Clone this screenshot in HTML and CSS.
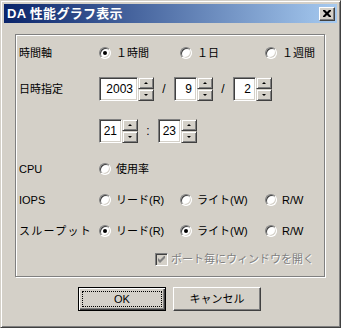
FILE: index.html
```html
<!DOCTYPE html>
<html lang="ja">
<head>
    <meta charset="UTF-8" />
    <title>DA 性能グラフ表示</title>
    <link rel="stylesheet" href="styles.css">
</head>
<body>

    <div class="window">
        <div class="titlebar">
            <span class="title">DA 性能グラフ表示</span>
            <button class="close">
                <svg width="8" height="7" viewBox="0 0 8 7">
                    <path d="M0 0h2l2 2 2-2h2v1L5.5 3.5 8 6v1H6L4 5 2 7H0V6l2.5-2.5L0 1z" fill="#000"/>
                </svg>
            </button>
        </div>

        <div class="client">
            <div class="group">
                <div class="row axis">
                    <span class="label">時間軸</span>
                    <span class="opt col1"><span class="radio on"></span>１時間</span>
                    <span class="opt col2"><span class="radio"></span>１日</span>
                    <span class="opt"><span class="radio"></span>１週間</span>
                </div>

                <div class="row date">
                    <span class="label">日時指定</span>
                    <span class="spin">
                        <span class="field wide">2003</span>
                        <span class="arrows"><span class="up"></span><span class="down"></span></span>
                    </span>
                    <span class="sep">/</span>
                    <span class="spin">
                        <span class="field">9</span>
                        <span class="arrows"><span class="up"></span><span class="down"></span></span>
                    </span>
                    <span class="sep">/</span>
                    <span class="spin">
                        <span class="field">2</span>
                        <span class="arrows"><span class="up"></span><span class="down"></span></span>
                    </span>
                </div>

                <div class="row time">
                    <span class="label"></span>
                    <span class="spin">
                        <span class="field">21</span>
                        <span class="arrows"><span class="up"></span><span class="down"></span></span>
                    </span>
                    <span class="sep">:</span>
                    <span class="spin">
                        <span class="field">23</span>
                        <span class="arrows"><span class="up"></span><span class="down"></span></span>
                    </span>
                </div>

                <div class="row cpu">
                    <span class="label">CPU</span>
                    <span class="opt col1"><span class="radio"></span>使用率</span>
                </div>

                <div class="row iops">
                    <span class="label">IOPS</span>
                    <span class="opt col1"><span class="radio"></span>リード(R)</span>
                    <span class="opt col2"><span class="radio"></span>ライト(W)</span>
                    <span class="opt"><span class="radio"></span>R/W</span>
                </div>

                <div class="row thru">
                    <span class="label wide-kana">スループット</span>
                    <span class="opt col1"><span class="radio on"></span>リード(R)</span>
                    <span class="opt col2"><span class="radio on"></span>ライト(W)</span>
                    <span class="opt"><span class="radio"></span>R/W</span>
                </div>

                <div class="row port">
                    <span class="check">
                        <svg width="7" height="7" viewBox="0 0 7 7">
                            <path d="M0 2v3l2 2 5-5V-1L2 4z" fill="#808080"/>
                        </svg>
                    </span>
                    <span class="disabled">ポート毎にウィンドウを開く</span>
                </div>
            </div>

            <div class="buttons">
                <button class="btn default"><span class="focus">OK</span></button>
                <button class="btn">キャンセル</button>
            </div>
        </div>
    </div>

</body>
</html>
```

FILE: styles.css
```css
* {
    box-sizing: border-box;
    margin: 0;
    padding: 0;
}

body {
    background: #fff;
    font-family: 'Liberation Sans', 'Noto Sans CJK JP', sans-serif;
    font-size: 11px;
    line-height: 13px;
    color: #000;
}

.window {
    width: 341px;
    height: 328px;
    background: #d4d0c8;
    border: 1px solid;
    border-color: #d4d0c8 #404040 #404040 #d4d0c8;
    box-shadow: inset 1px 1px #fff, inset -1px -1px #808080;
    padding: 3px;
}

.titlebar {
    height: 19px;
    display: flex;
    align-items: center;
    justify-content: space-between;
    padding: 0 2px 0 3px;
    background: linear-gradient(to right, #0a246a, #a6caf0);
}

.title {
    color: #fff;
    font-weight: bold;
    font-size: 13px;
    letter-spacing: 0.3px;
}

.close {
    width: 16px;
    height: 14px;
    display: flex;
    align-items: center;
    justify-content: center;
    background: #d4d0c8;
    border: 1px solid;
    border-color: #fff #404040 #404040 #fff;
    box-shadow: inset -1px -1px #808080;
}

.client {
    padding-top: 11px;
}

/* group box */
.group {
    width: 310px;
    margin-left: 11px;
    border: 1px solid #808080;
    box-shadow: 1px 1px #fff, inset 1px 1px #fff;
    padding: 6px 0 5px 3px;
}

.row {
    display: flex;
    align-items: center;
    height: 24px;
}

.date { margin-top: 12px; }
.time { margin-top: 18px; }
.cpu { margin-top: 14px; }
.iops { margin-top: 7px; }
.thru { margin-top: 7px; }
.port { margin-top: 4px; padding-left: 136px; }

.label {
    width: 80px;
    flex-shrink: 0;
}

.wide-kana {
    letter-spacing: 1.3px;
}

.opt {
    display: flex;
    align-items: center;
    gap: 5px;
}

.col1 { width: 81px; }
.col2 { width: 85px; }

.radio {
    position: relative;
    width: 12px;
    height: 12px;
    border-radius: 50%;
    border: 1px solid;
    border-color: #808080 #fff #fff #808080;
    box-shadow: inset 1px 1px #404040, inset -1px -1px #d4d0c8;
    background: #fff;
}

.radio.on::after {
    content: "";
    position: absolute;
    left: 3px;
    top: 3px;
    width: 4px;
    height: 4px;
    border-radius: 50%;
    background: #000;
}

/* spin boxes */
.spin {
    display: flex;
    height: 24px;
}

.field {
    width: 23px;
    height: 24px;
    background: #fff;
    border: 1px solid;
    border-color: #808080 #fff #fff #808080;
    box-shadow: inset 1px 1px #404040, inset -1px -1px #d4d0c8;
    text-align: right;
    padding-right: 4px;
    line-height: 22px;
    font-size: 12px;
}

.field.wide {
    width: 39px;
}

.arrows {
    display: flex;
    flex-direction: column;
    width: 16px;
}

.up, .down {
    height: 12px;
    display: flex;
    align-items: center;
    justify-content: center;
    border: 1px solid;
    border-color: #d4d0c8 #404040 #404040 #d4d0c8;
    box-shadow: inset 1px 1px #fff, inset -1px -1px #808080;
}

.up::after, .down::after {
    content: "";
    border-left: 2px solid transparent;
    border-right: 2px solid transparent;
}

.up::after { border-bottom: 2px solid #000; }
.down::after { border-top: 2px solid #000; }

.sep {
    width: 20px;
    text-align: center;
    font-size: 12px;
}

/* disabled checkbox */
.check {
    width: 13px;
    height: 13px;
    display: flex;
    align-items: center;
    justify-content: center;
    background: #d4d0c8;
    border: 1px solid;
    border-color: #808080 #fff #fff #808080;
    box-shadow: inset 1px 1px #404040, inset -1px -1px #d4d0c8;
    margin-right: 3px;
}

.disabled {
    color: #808080;
    text-shadow: 1px 1px 0 #fff;
}

/* dialog buttons */
.buttons {
    display: flex;
    gap: 7px;
    padding: 10px 0 0 74px;
}

.btn {
    width: 88px;
    height: 24px;
    font: inherit;
    background: #d4d0c8;
    border: 1px solid;
    border-color: #fff #404040 #404040 #fff;
    box-shadow: inset -1px -1px #808080;
    display: flex;
    align-items: center;
    justify-content: center;
}

.btn.default {
    border: 1px solid #000;
    box-shadow: inset 1px 1px #fff, inset -1px -1px #404040, inset -2px -2px #808080;
    padding: 3px;
}

.focus {
    width: 100%;
    height: 100%;
    border: 1px dotted #000;
    display: flex;
    align-items: center;
    justify-content: center;
}
```
